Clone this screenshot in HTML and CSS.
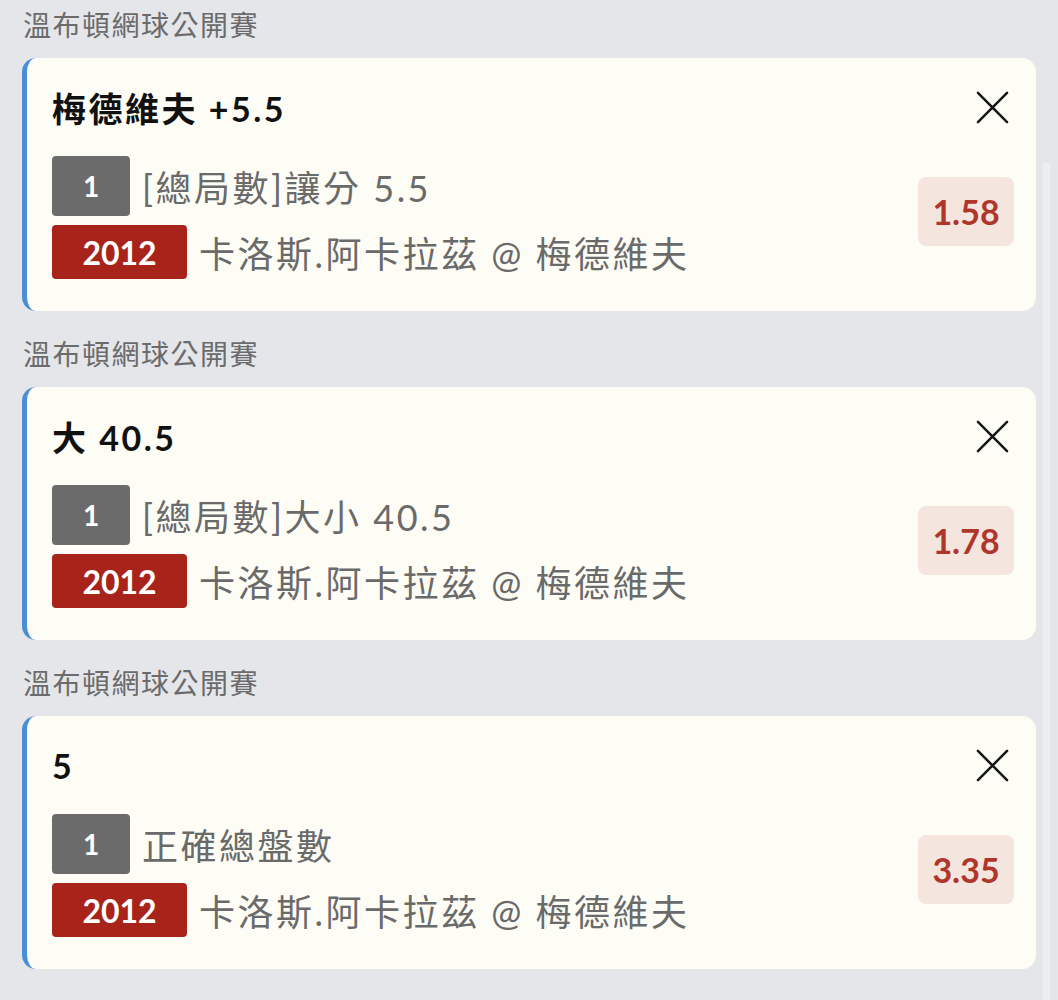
FILE: index.html
```html
<!DOCTYPE html>
<html lang="zh-Hant">
<head>
    <meta charset="UTF-8">
    <meta name="viewport" content="width=device-width, initial-scale=1.0">
    <title>投注單</title>
    <link rel="stylesheet" href="styles.css">
</head>
<body>
    <div class="slip">
        <div class="group">
            <div class="league">溫布頓網球公開賽</div>
            <div class="card">
                <div class="card-head">
                    <div class="pick">梅德維夫 +5.5</div>
                    <button class="close" aria-label="移除">
                        <svg viewBox="0 0 34 34" width="34" height="34"><path d="M2 2 L32 32 M32 2 L2 32" /></svg>
                    </button>
                </div>
                <div class="card-body">
                    <div class="lines">
                        <div class="line"><span class="tag tag-gray">1</span><span class="desc">[總局數]讓分 5.5</span></div>
                        <div class="line"><span class="tag tag-red">2012</span><span class="desc">卡洛斯.阿卡拉茲 @ 梅德維夫</span></div>
                    </div>
                    <div class="odds">1.58</div>
                </div>
            </div>
        </div>

        <div class="group">
            <div class="league">溫布頓網球公開賽</div>
            <div class="card">
                <div class="card-head">
                    <div class="pick">大 40.5</div>
                    <button class="close" aria-label="移除">
                        <svg viewBox="0 0 34 34" width="34" height="34"><path d="M2 2 L32 32 M32 2 L2 32" /></svg>
                    </button>
                </div>
                <div class="card-body">
                    <div class="lines">
                        <div class="line"><span class="tag tag-gray">1</span><span class="desc">[總局數]大小 40.5</span></div>
                        <div class="line"><span class="tag tag-red">2012</span><span class="desc">卡洛斯.阿卡拉茲 @ 梅德維夫</span></div>
                    </div>
                    <div class="odds">1.78</div>
                </div>
            </div>
        </div>

        <div class="group">
            <div class="league">溫布頓網球公開賽</div>
            <div class="card">
                <div class="card-head">
                    <div class="pick">5</div>
                    <button class="close" aria-label="移除">
                        <svg viewBox="0 0 34 34" width="34" height="34"><path d="M2 2 L32 32 M32 2 L2 32" /></svg>
                    </button>
                </div>
                <div class="card-body">
                    <div class="lines">
                        <div class="line"><span class="tag tag-gray">1</span><span class="desc">正確總盤數</span></div>
                        <div class="line"><span class="tag tag-red">2012</span><span class="desc">卡洛斯.阿卡拉茲 @ 梅德維夫</span></div>
                    </div>
                    <div class="odds">3.35</div>
                </div>
            </div>
        </div>
    </div>
    <div class="scroll-thumb"></div>
</body>
</html>
```

FILE: styles.css
```css
body {
    margin: 0;
    background: #e4e6ea;
    font-family: Lato, "Noto Sans CJK TC", sans-serif;
    overflow: hidden;
}
.slip {
    padding: 0 22px;
    display: flex;
    flex-direction: column;
    gap: 18px;
}
.league {
    height: 50px;
    line-height: 50px;
    margin-bottom: 8px;
    padding-left: 1px;
    font-size: 28px;
    letter-spacing: 1.5px;
    color: #6b6b6b;
}
.card {
    background: #fdfdf6;
    border-left: 5px solid #4a8fd6;
    border-radius: 14px;
    padding: 28px 22px 32px 25px;
}
.card-head {
    display: flex;
    justify-content: space-between;
    align-items: center;
    height: 42px;
}
.pick {
    font-size: 34px;
    font-weight: 700;
    color: #111;
    letter-spacing: 2.5px;
}
.close {
    width: 44px;
    height: 44px;
    padding: 0;
    border: none;
    background: none;
    display: flex;
    align-items: center;
    justify-content: center;
    cursor: pointer;
}
.close svg {
    width: 33px;
    height: 33px;
}
.close path {
    stroke: #151515;
    stroke-width: 2.6;
    stroke-linecap: round;
    fill: none;
}
.card-body {
    display: flex;
    justify-content: space-between;
    align-items: center;
    margin-top: 28px;
}
.lines {
    display: flex;
    flex-direction: column;
    gap: 9px;
}
.line {
    display: flex;
    align-items: center;
    gap: 12px;
}
.desc {
    font-size: 36px;
    letter-spacing: 2.5px;
    color: #6a6a6a;
    white-space: nowrap;
}
.tag {
    display: flex;
    align-items: center;
    justify-content: center;
    color: #fff;
    font-weight: 700;
    border-radius: 4px;
}
.tag-gray {
    width: 78px;
    height: 60px;
    background: #6b6b6b;
    font-size: 28px;
}
.tag-red {
    width: 135px;
    height: 54px;
    background: #a8241a;
    font-size: 32px;
}
.odds {
    width: 96px;
    height: 69px;
    margin-top: -12px;
    display: flex;
    align-items: center;
    justify-content: center;
    background: #f4e5de;
    border-radius: 8px;
    color: #b0352b;
    font-size: 34px;
    font-weight: 700;
}
.scroll-thumb {
    position: fixed;
    top: 162px;
    left: 1043px;
    width: 7px;
    bottom: 0;
    background: #eceef1;
    border-radius: 4px 4px 0 0;
}
```
